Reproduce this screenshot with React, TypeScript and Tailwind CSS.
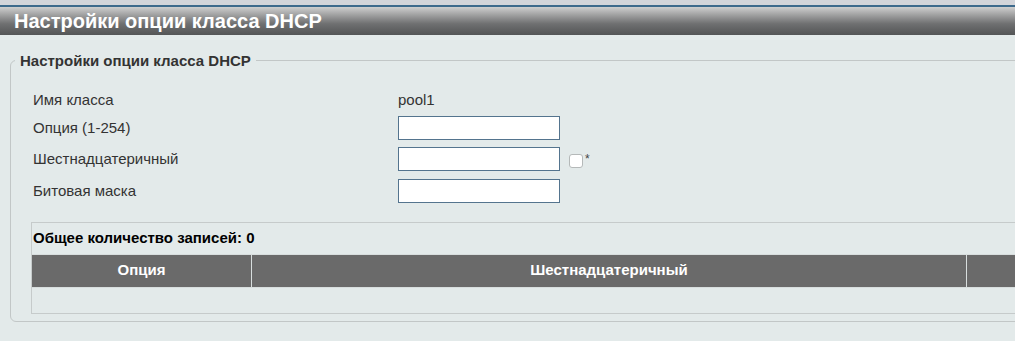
const font = { fontFamily: '"Liberation Sans", Arial, sans-serif' };

const rows = [
  { label: 'Опция (1-254)', check: false },
  { label: 'Шестнадцатеричный', check: true },
  { label: 'Битовая маска', check: false },
];

export default function App() {
  return (
    <div
      className="w-[1015px] h-[341px] overflow-hidden bg-[#e3eaea] text-[#333]"
      style={font}
    >
      {/* top strip + title bar */}
      <div className="h-[5px] bg-[#d3d5da]" />
      <div className="h-[2px] bg-[#3d6a8c]" />
      <div className="h-[28px] flex items-center pl-[14px] bg-gradient-to-b from-[#cfcfcf] via-[#6f7071] via-60% to-[#535556]">
        <h1 className="text-[20px] font-bold text-white leading-none">Настройки опции класса DHCP</h1>
      </div>

      {/* fieldset */}
      <fieldset className="ml-[10px] w-[1030px] mt-[17px] border border-[#c2c7c7] rounded-[6px] pl-[20px] pr-0 pb-[7px]">
        <legend className="ml-[-16px] px-[5px] text-[15px] font-bold text-[#333] leading-[17px]">
          Настройки опции класса DHCP
        </legend>

        <div className="pt-[20px] text-[15px]">
          <div className="flex items-center h-[23px]">
            <span className="w-[367px] pl-[2px]">Имя класса</span>
            <span>pool1</span>
          </div>
          {rows.map((r) => (
            <div key={r.label} className="flex items-center h-[31.5px]">
              <span className="w-[367px] pl-[2px]">{r.label}</span>
              <input
                type="text"
                className="w-[162px] h-[24px] bg-white border border-[#54748e] outline-none"
              />
              {r.check && (
                <span className="flex items-start ml-[9px] mt-[4px]">
                  <span className="w-[14px] h-[14px] rounded-[3px] border border-[#b5b9b9] bg-white" />
                  <span className="text-[12px] leading-none ml-[2px] -mt-[1px] text-[#444]">*</span>
                </span>
              )}
            </div>
          ))}
        </div>

        {/* entries table box */}
        <div className="mt-[15px] border border-[#c6cbcb] w-[1000px]">
          <div className="h-[31px] flex items-center pl-[1px] text-[15px] font-bold text-black">
            Общее количество записей: 0
          </div>
          <div className="flex h-[34px] bg-[#6a6a6a] border-y border-[#d8dede] text-white text-[15px] font-bold">
            <div className="w-[220px] flex items-center justify-center border-r border-[#d8dede]">Опция</div>
            <div className="w-[715px] flex items-center justify-center border-r border-[#d8dede]">Шестнадцатеричный</div>
            <div className="flex-1" />
          </div>
          <div className="h-[25px]" />
        </div>
      </fieldset>
    </div>
  );
}
